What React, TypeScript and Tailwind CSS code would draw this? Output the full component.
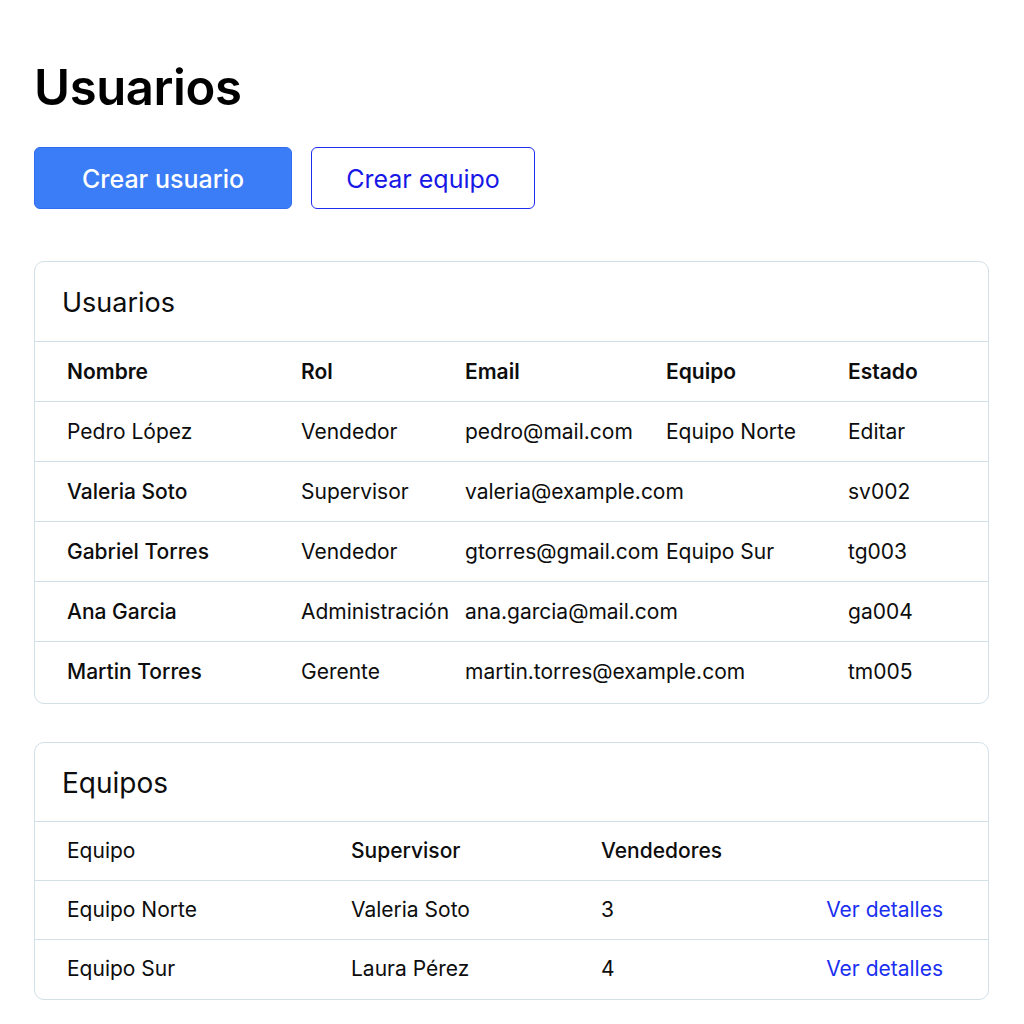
const users = [
  { name: "Pedro López", role: "Vendedor", email: "pedro@mail.com", team: "Equipo Norte", state: "Editar", strong: false },
  { name: "Valeria Soto", role: "Supervisor", email: "valeria@example.com", team: "", state: "sv002", strong: true },
  { name: "Gabriel Torres", role: "Vendedor", email: "gtorres@gmail.com", team: "Equipo Sur", state: "tg003", strong: true },
  { name: "Ana Garcia", role: "Administración", email: "ana.garcia@mail.com", team: "", state: "ga004", strong: true },
  { name: "Martin Torres", role: "Gerente", email: "martin.torres@example.com", team: "", state: "tm005", strong: true },
];

const teams = [
  { name: "Equipo Norte", supervisor: "Valeria Soto", sellers: 3 },
  { name: "Equipo Sur", supervisor: "Laura Pérez", sellers: 4 },
];

const userCols = "grid grid-cols-[234px_164px_201px_182px_1fr] items-center pl-[32px]";
const teamCols = "grid grid-cols-[284px_250px_1fr_auto] items-center pl-[32px] pr-[45px]";

export default function App() {
  return (
    <div className="min-h-screen bg-white px-[34px] pt-[58px] text-[#0d0d0d] font-['Inter','Liberation_Sans',sans-serif]">
      <h1 className="text-[49px] font-semibold leading-[60px] tracking-[-0.4px] text-black">Usuarios</h1>

      <div className="mt-[29px] flex gap-[19px]">
        <button className="h-[62px] w-[258px] rounded-[6px] border border-[#2f6cf0] bg-[#3b7cf7] pt-[3px] text-[25px] font-medium text-white">
          Crear usuario
        </button>
        <button className="h-[62px] w-[224px] rounded-[6px] border border-[#1e2cf0] bg-white pt-[3px] text-[25px] text-[#1717e6]">
          Crear equipo
        </button>
      </div>

      <section className="mt-[52px] w-[955px] overflow-hidden rounded-[10px] border border-[#d2e0e8] pb-[2px]">
        <h2 className="flex h-[79px] items-center pl-[27px] pt-[3px] text-[27px]">Usuarios</h2>
        <div className={`${userCols} h-[60px] border-t border-[#d2e0e8] text-[21px] font-semibold`}>
          <span>Nombre</span>
          <span>Rol</span>
          <span>Email</span>
          <span>Equipo</span>
          <span>Estado</span>
        </div>
        {users.map((u) => (
          <div key={u.email} className={`${userCols} h-[60px] border-t border-[#d2e0e8] text-[21px] whitespace-nowrap`}>
            <span className={u.strong ? "font-medium" : ""}>{u.name}</span>
            <span>{u.role}</span>
            <span>{u.email}</span>
            <span>{u.team}</span>
            <span>{u.state}</span>
          </div>
        ))}
      </section>

      <section className="mt-[38px] w-[955px] overflow-hidden rounded-[10px] border border-[#d2e0e8] pb-[1px]">
        <h2 className="flex h-[78px] items-center pl-[27px] pt-[2px] text-[28px]">Equipos</h2>
        <div className={`${teamCols} h-[59px] border-t border-[#d2e0e8] text-[21px]`}>
          <span>Equipo</span>
          <span className="font-medium">Supervisor</span>
          <span className="font-medium">Vendedores</span>
          <span />
        </div>
        {teams.map((t) => (
          <div key={t.name} className={`${teamCols} h-[59px] border-t border-[#d2e0e8] text-[21px]`}>
            <span>{t.name}</span>
            <span>{t.supervisor}</span>
            <span>{t.sellers}</span>
            <a href="#" className="text-[#1a2ff0]">Ver detalles</a>
          </div>
        ))}
      </section>
    </div>
  );
}
